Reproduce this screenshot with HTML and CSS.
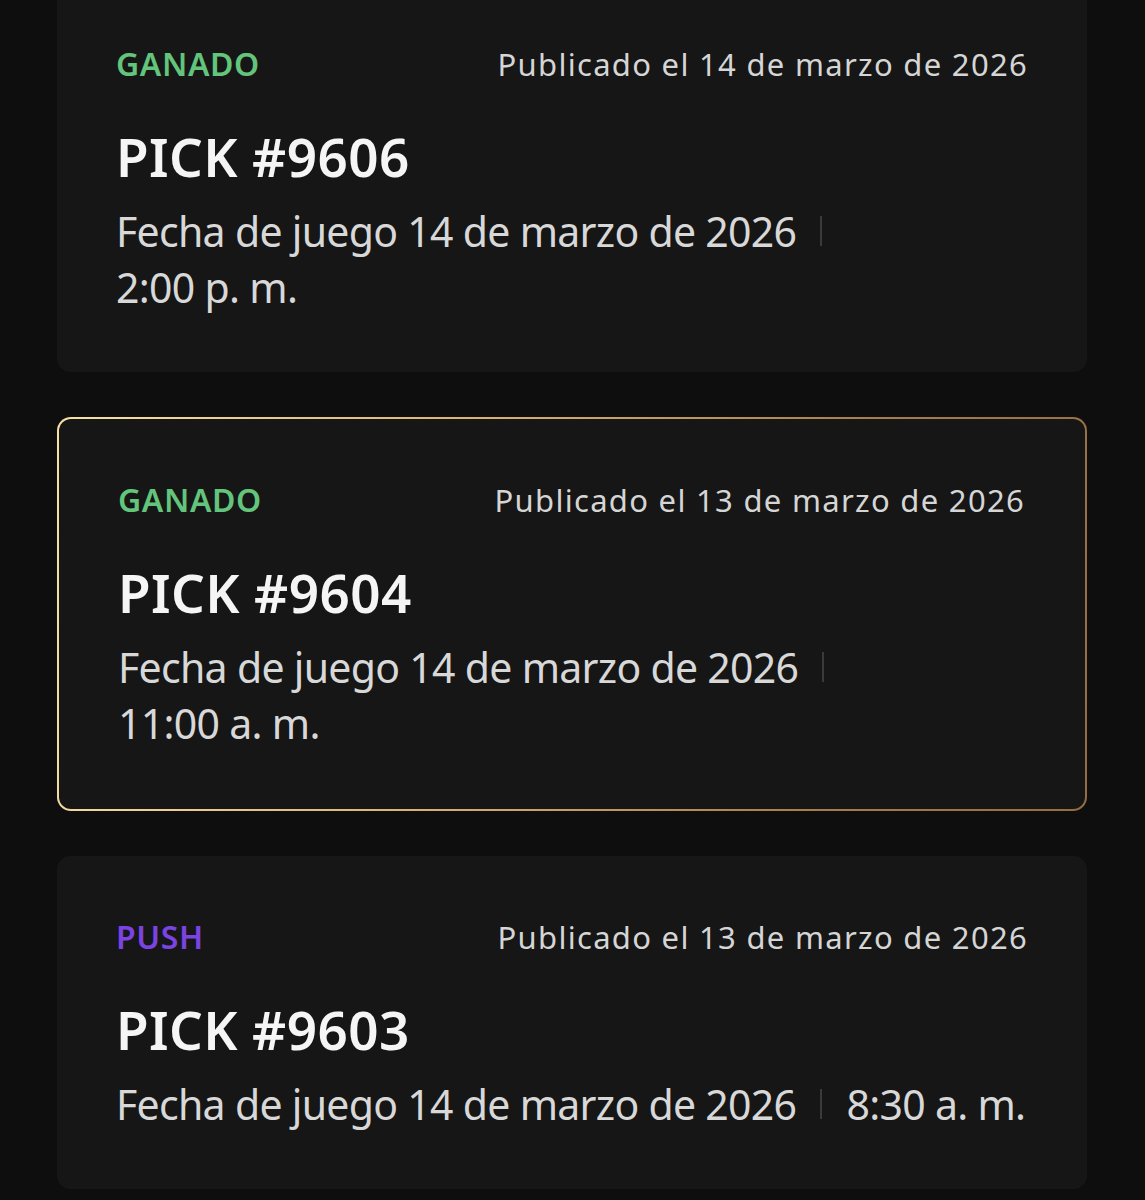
FILE: index.html
```html
<!DOCTYPE html>
<html lang="es">
<head>
    <meta charset="UTF-8">
    <meta name="viewport" content="width=device-width, initial-scale=1.0">
    <title>Historial de picks</title>
    <link rel="stylesheet" href="styles.css">
</head>
<body>

    <div class="pick-list">
        <div class="pick-card">
            <div class="pick-head">
                <span class="status won">GANADO</span>
                <span class="published">Publicado el 14 de marzo de 2026</span>
            </div>
            <h2 class="pick-title">PICK #9606</h2>
            <div class="pick-meta wrap">
                <span>Fecha de juego 14 de marzo de 2026</span>
                <span class="sep"></span>
                <span class="time">2:00 p. m.</span>
            </div>
        </div>

        <div class="pick-card featured">
            <div class="pick-head">
                <span class="status won">GANADO</span>
                <span class="published">Publicado el 13 de marzo de 2026</span>
            </div>
            <h2 class="pick-title">PICK #9604</h2>
            <div class="pick-meta wrap">
                <span>Fecha de juego 14 de marzo de 2026</span>
                <span class="sep"></span>
                <span class="time">11:00 a. m.</span>
            </div>
        </div>

        <div class="pick-card">
            <div class="pick-head">
                <span class="status push">PUSH</span>
                <span class="published">Publicado el 13 de marzo de 2026</span>
            </div>
            <h2 class="pick-title">PICK #9603</h2>
            <div class="pick-meta">
                <span>Fecha de juego 14 de marzo de 2026</span>
                <span class="sep"></span>
                <span class="time">8:30 a. m.</span>
            </div>
        </div>
    </div>

</body>
</html>
```

FILE: styles.css
```css
body {
    margin: 0;
    background-color: #0e0e0e;
    font-family: "Noto Sans", "Open Sans", sans-serif;
    color: #f4f4f4;
}
.pick-list {
    display: flex;
    flex-direction: column;
    gap: 45px;
    padding: 0 58px 0 57px;
    margin-top: -17px;
}
.pick-card {
    background-color: #161616;
    border: 2px solid #171717;
    border-radius: 14px;
    padding: 59px 57px 55px 57px;
}
.pick-card.featured {
    border: 2px solid transparent;
    background: linear-gradient(#161616, #161616) padding-box,
                linear-gradient(100deg, #f8e1a6 0%, #dcb878 35%, #a77d4a 75%, #946d42 100%) border-box;
    padding: 61px 60px 58px 59px;
}
.pick-head {
    display: flex;
    justify-content: space-between;
    align-items: baseline;
    line-height: 40px;
}
.status {
    font-size: 32px;
    font-weight: 600;
    letter-spacing: 0.6px;
}
.status.won {
    color: #63c47c;
}
.status.push {
    color: #7b43e2;
}
.published {
    font-size: 31px;
    color: #d5d5d5;
    letter-spacing: 1.3px;
}
.pick-title {
    margin: 41px 0 0;
    font-size: 53px;
    font-weight: 600;
    line-height: 64px;
    letter-spacing: 0.4px;
    color: #f5f5f5;
}
.pick-meta {
    display: flex;
    flex-wrap: wrap;
    align-items: center;
    column-gap: 24px;
    margin-top: 14px;
    font-size: 41px;
    line-height: 56px;
    letter-spacing: -0.7px;
    color: #d8d8d8;
}
.pick-meta.wrap .time {
    flex-basis: 100%;
}
.sep {
    width: 2px;
    height: 30px;
    background-color: #3a3a3a;
}
```
